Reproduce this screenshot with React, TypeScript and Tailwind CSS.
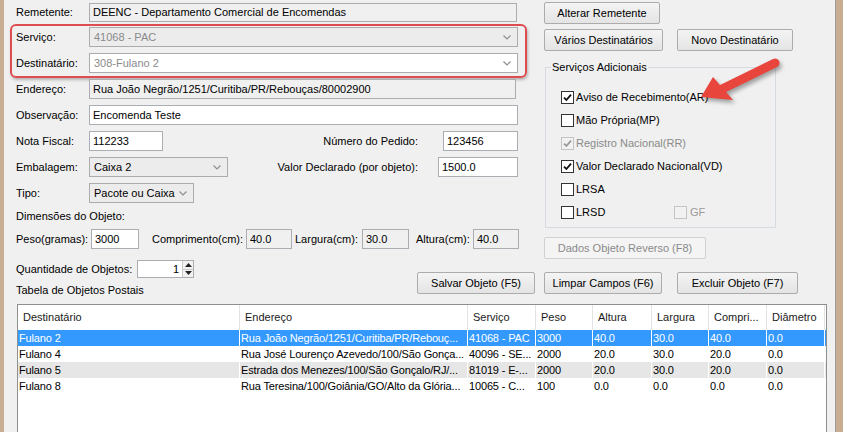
import React from "react";

type Tone = "white" | "gray";

function Chevron() {
  return (
    <svg width="8" height="5" viewBox="0 0 8 5" className="shrink-0">
      <polyline points="0.5,0.5 4,4 7.5,0.5" fill="none" stroke="#8f8f8f" strokeWidth="1.2" />
    </svg>
  );
}

function Field({ w, value, tone = "white", right }: { w: string; value: string; tone?: Tone; right?: boolean }) {
  return (
    <div
      className={`${w} flex h-full items-center border border-[#abadb3] px-[3px] ${
        tone === "white" ? "bg-white" : "bg-[#f0f0f0]"
      } ${right ? "justify-end" : ""}`}
    >
      <span className="whitespace-nowrap">{value}</span>
    </div>
  );
}

function Combo({ w, value, tone = "gray", muted }: { w: string; value: string; tone?: Tone; muted?: boolean }) {
  return (
    <div
      className={`${w} flex h-full items-center justify-between border border-[#acacac] pl-[4px] pr-[6px] ${
        tone === "white" ? "bg-white" : "bg-[#ececec]"
      }`}
    >
      <span className={`whitespace-nowrap ${muted ? "text-[#8a8a8a]" : ""}`}>{value}</span>
      <Chevron />
    </div>
  );
}

function Button({ w, label, disabled, className = "" }: { w: string; label: string; disabled?: boolean; className?: string }) {
  return (
    <div
      className={`${w} ${className} flex h-[22px] items-center justify-center rounded-[2px] border ${
        disabled
          ? "border-[#d0d0d0] bg-[#f4f4f4] text-[#8a8a8a]"
          : "border-[#acacac] bg-gradient-to-b from-[#f4f4f4] to-[#e4e4e4]"
      }`}
    >
      {label}
    </div>
  );
}

function Check({ checked, disabled }: { checked?: boolean; disabled?: boolean }) {
  return (
    <span
      className={`flex h-[13px] w-[13px] shrink-0 items-center justify-center border ${
        disabled ? "border-[#c4c4c4] bg-[#f2f2f2]" : "border-[#333333] bg-white"
      }`}
    >
      {checked && (
        <svg width="9" height="9" viewBox="0 0 9 9">
          <polyline
            points="1,4.6 3.4,7 8,1.6"
            fill="none"
            stroke={disabled ? "#9a9a9a" : "#111"}
            strokeWidth="1.8"
          />
        </svg>
      )}
    </span>
  );
}

function Label({ w, children, className = "" }: { w: string; children: React.ReactNode; className?: string }) {
  return <div className={`${w} ${className} shrink-0 whitespace-nowrap`}>{children}</div>;
}

const cols = [222, 228, 68, 57, 59, 57, 58, 58];
const headers = ["Destinatário", "Endereço", "Serviço", "Peso", "Altura", "Largura", "Compri...", "Diâmetro"];
const rows = [
  ["Fulano 2", "Rua João Negrão/1251/Curitiba/PR/Rebouç...", "41068 - PAC", "3000", "40.0", "30.0", "40.0", "0.0"],
  ["Fulano 4", "Rua José Lourenço Azevedo/100/São Gonça...", "40096 - SE...", "2000", "20.0", "30.0", "20.0", "0.0"],
  ["Fulano 5", "Estrada dos Menezes/100/São Gonçalo/RJ/...", "81019 - E-...", "2000", "20.0", "30.0", "20.0", "0.0"],
  ["Fulano 8", "Rua Teresina/100/Goiânia/GO/Alto da Glória...", "10065 - C...", "100", "0.0", "0.0", "0.0", "0.0"],
];

const extras = [
  { label: "Aviso de Recebimento(AR)", checked: true },
  { label: "Mão Própria(MP)" },
  { label: "Registro Nacional(RR)", checked: true, disabled: true },
  { label: "Valor Declarado Nacional(VD)", checked: true },
  { label: "LRSA" },
];

export default function App() {
  return (
    <div className="relative h-[432px] w-[843px] overflow-hidden bg-[#c8ad93] font-['Liberation_Sans',Arial,sans-serif] text-[11px] leading-[13px] text-black">
      <div className="ml-[4px] h-full w-[832px] border-r border-[#9c9c9c] bg-[#f0f0f0] pl-[12px]">
        <div className="flex items-start">
          {/* left column */}
          <div className="w-[511px]">
            <div className="mt-[3px] flex h-[19px] items-center">
              <Label w="w-[73px]">Remetente:</Label>
              <Field w="w-[428px]" tone="gray" value="DEENC - Departamento Comercial de Encomendas" />
            </div>

            <div className="-ml-[6px] mt-[2px] w-[517px] rounded-[6px] border-2 border-[#de4c4f] pb-[3px] pl-[4px] pt-[1px] shadow-[1px_2px_3px_rgba(0,0,0,0.25)]">
              <div className="flex h-[20px] items-center">
                <Label w="w-[73px]">Serviço:</Label>
                <Combo w="w-[429px]" value="41068 - PAC" muted tone="gray" />
              </div>
              <div className="mt-[6px] flex h-[20px] items-center">
                <Label w="w-[73px]">Destinatário:</Label>
                <Combo w="w-[429px]" value="308-Fulano 2" muted tone="white" />
              </div>
            </div>

            <div className="mt-[1px] flex h-[20px] items-center">
              <Label w="w-[73px]">Endereço:</Label>
              <Field w="w-[427px]" tone="gray" value="Rua João Negrão/1251/Curitiba/PR/Rebouças/80002900" />
            </div>
            <div className="mt-[6px] flex h-[20px] items-center">
              <Label w="w-[73px]">Observação:</Label>
              <Field w="w-[429px]" value="Encomenda Teste" />
            </div>
            <div className="mt-[6px] flex h-[20px] w-[502px] items-center">
              <Label w="w-[73px]">Nota Fiscal:</Label>
              <Field w="w-[74px]" value="112233" />
              <div className="flex-1 text-right">Número do Pedido:</div>
              <div className="ml-[25px] h-full">
                <Field w="w-[75px]" value="123456" />
              </div>
            </div>
            <div className="mt-[6px] flex h-[20px] w-[502px] items-center">
              <Label w="w-[73px]">Embalagem:</Label>
              <Combo w="w-[139px]" value="Caixa 2" />
              <div className="flex-1 text-right">Valor Declarado (por objeto):</div>
              <div className="ml-[20px] h-full">
                <Field w="w-[80px]" value="1500.0" />
              </div>
            </div>
            <div className="mt-[6px] flex h-[20px] items-center">
              <Label w="w-[73px]">Tipo:</Label>
              <Combo w="w-[105px]" value="Pacote ou Caixa" />
            </div>
            <div className="mt-[3px] flex h-[20px] items-center">Dimensões do Objeto:</div>
            <div className="mt-[3px] flex h-[20px] items-center">
              <Label w="w-[75px]">Peso(gramas):</Label>
              <Field w="w-[48px]" value="3000" />
              <Label w="w-[94px]" className="ml-[13px]">Comprimento(cm):</Label>
              <Field w="w-[46px]" tone="gray" value="40.0" />
              <Label w="w-[67px]" className="ml-[3px]">Largura(cm):</Label>
              <Field w="w-[47px]" tone="gray" value="30.0" />
              <Label w="w-[57px]" className="ml-[7px]">Altura(cm):</Label>
              <Field w="w-[46px]" tone="gray" value="40.0" />
            </div>
          </div>

          {/* right column */}
          <div className="ml-[17px]">
            <Button w="w-[116px]" label="Alterar Remetente" className="mt-[2px]" />
            <div className="mt-[5px] flex">
              <Button w="w-[119px]" label="Vários Destinatários" />
              <Button w="w-[116px]" label="Novo Destinatário" className="ml-[14px]" />
            </div>
            <fieldset className="ml-[1px] mt-[10px] w-[231px] border border-[#d5dbe0] pb-[3px] pl-[5px] pt-[12px]">
              <legend className="px-[1px]">Serviços Adicionais</legend>
              <div className="pl-[10px]">
                {extras.map((e) => (
                  <div key={e.label} className="flex h-[23px] items-center">
                    <Check checked={e.checked} disabled={e.disabled} />
                    <span className={`ml-[2px] ${e.disabled ? "text-[#8a8a8a]" : ""}`}>{e.label}</span>
                  </div>
                ))}
                <div className="flex h-[23px] items-center">
                  <Check />
                  <span className="ml-[2px] w-[98px]">LRSD</span>
                  <Check disabled />
                  <span className="ml-[3px] text-[#9a9a9a]">GF</span>
                </div>
              </div>
            </fieldset>
            <Button w="w-[162px]" label="Dados Objeto Reverso (F8)" disabled className="mt-[9px]" />
          </div>
        </div>

        <div className="flex items-start">
          <div className="w-[401px]">
            <div className="mt-[1px] flex h-[18px] items-center">
              <Label w="w-[121px]">Quantidade de Objetos:</Label>
              <div className="flex h-full w-[57px] border border-[#abadb3] bg-white">
                <div className="flex flex-1 items-center justify-end pr-[3px]">1</div>
                <div className="flex w-[11px] flex-col border-l border-[#c8c8c8]">
                  <div className="flex flex-1 items-center justify-center border-b border-[#c8c8c8] bg-[#f2f2f2]">
                    <svg width="7" height="4" viewBox="0 0 7 4">
                      <polygon points="0,4 3.5,0 7,4" fill="#222" />
                    </svg>
                  </div>
                  <div className="flex flex-1 items-center justify-center bg-[#f2f2f2]">
                    <svg width="7" height="4" viewBox="0 0 7 4">
                      <polygon points="0,0 3.5,4 7,0" fill="#222" />
                    </svg>
                  </div>
                </div>
              </div>
            </div>
            <div className="mt-[6px]">Tabela de Objetos Postais</div>
          </div>
          <div className="mt-[13px] flex">
            <Button w="w-[118px]" label="Salvar Objeto (F5)" />
            <Button w="w-[118px]" label="Limpar Campos (F6)" className="ml-[9px]" />
            <Button w="w-[121px]" label="Excluir Objeto (F7)" className="ml-[15px]" />
          </div>
        </div>

        <div className="ml-[1px] mt-[7px] h-[140px] w-[810px] border border-[#8e8f8f] bg-white">
          <div className="flex h-[25px] bg-white">
            {headers.map((h, i) => (
              <div
                key={h}
                style={{ width: cols[i] }}
                className="flex shrink-0 items-center border-r border-[#e3e3e3] pl-[5px] text-[#1a1a1a]"
              >
                {h}
              </div>
            ))}
          </div>
          {rows.map((r, ri) => (
            <div
              key={r[0]}
              className={`flex h-[16px] ${
                ri === 0 ? "bg-[#3399ff] text-white" : ri === 2 ? "bg-[#e6e6e6]" : "bg-white"
              }`}
            >
              {r.map((c, ci) => (
                <div
                  key={ci}
                  style={{ width: cols[ci] }}
                  className="shrink-0 overflow-hidden whitespace-nowrap border-r border-white pl-[1px] leading-[16px] tracking-[-0.15px]"
                >
                  {c}
                </div>
              ))}
            </div>
          ))}
        </div>
      </div>

      {/* annotation arrow */}
      <svg
        className="pointer-events-none absolute left-[690px] top-[55px] drop-shadow-[2px_3px_2px_rgba(0,0,0,0.35)]"
        width="95"
        height="55"
        viewBox="0 0 95 55"
      >
        <line x1="85" y1="8" x2="30" y2="35" stroke="#e8453c" strokeWidth="9" strokeLinecap="round" />
        <polygon points="11,42 23,22 43,45" fill="#e8453c" />
      </svg>
    </div>
  );
}
